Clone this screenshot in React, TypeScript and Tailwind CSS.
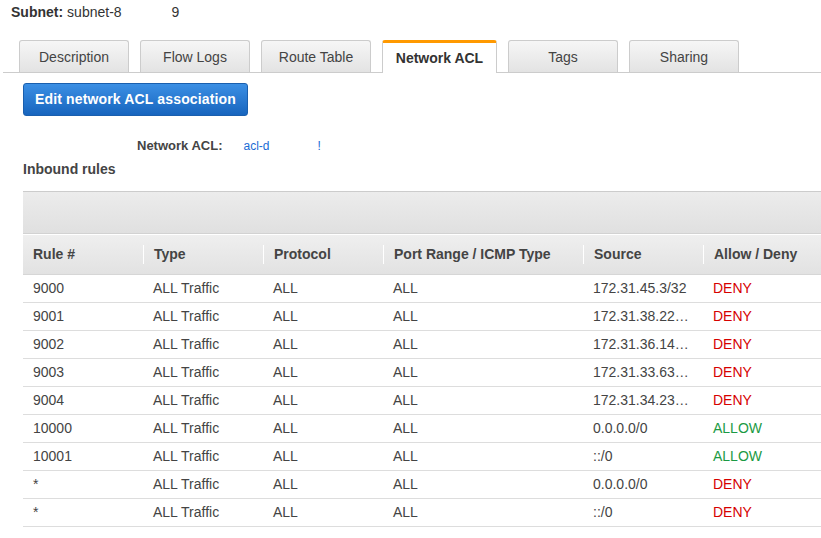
import React from "react";

const tabs = ["Description", "Flow Logs", "Route Table", "Network ACL", "Tags", "Sharing"];

const rows: [string, string, string, string, string, string][] = [
  ["9000", "ALL Traffic", "ALL", "ALL", "172.31.45.3/32", "DENY"],
  ["9001", "ALL Traffic", "ALL", "ALL", "172.31.38.22…", "DENY"],
  ["9002", "ALL Traffic", "ALL", "ALL", "172.31.36.14…", "DENY"],
  ["9003", "ALL Traffic", "ALL", "ALL", "172.31.33.63…", "DENY"],
  ["9004", "ALL Traffic", "ALL", "ALL", "172.31.34.23…", "DENY"],
  ["10000", "ALL Traffic", "ALL", "ALL", "0.0.0.0/0", "ALLOW"],
  ["10001", "ALL Traffic", "ALL", "ALL", "::/0", "ALLOW"],
  ["*", "ALL Traffic", "ALL", "ALL", "0.0.0.0/0", "DENY"],
  ["*", "ALL Traffic", "ALL", "ALL", "::/0", "DENY"],
];

const headers = ["Rule #", "Type", "Protocol", "Port Range / ICMP Type", "Source", "Allow / Deny"];

const grid = "grid grid-cols-[120px_120px_120px_200px_120px_1fr]";

export default function App() {
  return (
    <div
      className="w-[821px] h-[538px] overflow-hidden bg-white text-[#444]"
      style={{ fontFamily: '"Liberation Sans", Arial, sans-serif' }}
    >
      {/* Subnet line */}
      <div className="pl-[11px] pt-[4px] h-[40px] text-[14px] leading-[17px] text-[#333] flex">
        <span className="font-bold">Subnet:</span>
        <span className="ml-[4px]">subnet-8</span>
        <span className="ml-[50px]">9</span>
      </div>

      {/* Tabs */}
      <div className="ml-[3px] border-b border-[#ccc] h-[33px] pl-[16px] flex gap-[11px] items-end">
        {tabs.map((t) =>
          t === "Network ACL" ? (
            <div
              key={t}
              className="w-[115px] h-[33px] -mb-px bg-white border-x border-[#ccc] border-t-[3px] border-t-[#f90] rounded-t-[3px] flex items-center justify-center text-[14px] font-bold text-[#333] pt-[1px]"
            >
              {t}
            </div>
          ) : (
            <div
              key={t}
              className="w-[110px] h-[32px] border border-b-0 border-[#ccc] rounded-t-[3px] bg-gradient-to-b from-[#f6f6f6] to-[#e3e3e3] flex items-center justify-center text-[14px] text-[#444] pt-[2px]"
            >
              {t}
            </div>
          )
        )}
      </div>

      {/* Button */}
      <div className="pl-[23px] pt-[10px]">
        <button className="w-[225px] h-[33px] rounded-[3px] border border-[#1a5fae] bg-gradient-to-b from-[#3b8fe4] to-[#1765be] text-white font-bold text-[14px] tracking-[0.15px] flex items-center justify-center">
          Edit network ACL association
        </button>
      </div>

      {/* Network ACL */}
      <div className="flex items-center h-[16px] mt-[22px] text-[13px]">
        <span className="ml-[137px] font-bold text-[#444]">Network ACL:</span>
        <span className="ml-[21px] text-[12px] text-[#1a6bd4]">acl-d</span>
        <span className="ml-[48px] text-[12px] text-[#1a6bd4]">!</span>
      </div>

      {/* Inbound rules */}
      <div className="pl-[23px] mt-[7px] h-[17px] text-[14px] font-bold text-[#444] leading-[17px]">Inbound rules</div>

      {/* Table */}
      <div className="ml-[23px] mt-[13px]">
        <div className="h-[43px] border-t border-[#ccc] border-b border-b-[#d2d2d2] bg-gradient-to-b from-[#ececec] to-[#e0e0e0]" />
        <div className={`${grid} h-[41px] border-t border-white border-b border-b-[#d6d6d6] bg-gradient-to-b from-[#efefef] to-[#e2e2e2]`}>
          {headers.map((h, i) => (
            <div key={h} className="flex items-center text-[14px] font-bold text-[#444]">
              {i === 0 ? (
                <span className="ml-[10px]">{h}</span>
              ) : (
                <>
                  <span className="w-px h-[19px] bg-[#cfcfcf] border-r border-white" />
                  <span className="ml-[10px]">{h}</span>
                </>
              )}
            </div>
          ))}
        </div>
        {rows.map((r, ri) => (
          <div key={ri} className={`${grid} h-[28px] border-b border-[#ddd] text-[14px]`}>
            {r.map((c, ci) => (
              <div
                key={ci}
                className={`flex items-center pl-[10px] whitespace-nowrap ${
                  ci === 5 ? (c === "DENY" ? "text-[#d60000]" : "text-[#1b9a44]") : "text-[#444]"
                }`}
              >
                {c}
              </div>
            ))}
          </div>
        ))}
      </div>
    </div>
  );
}
